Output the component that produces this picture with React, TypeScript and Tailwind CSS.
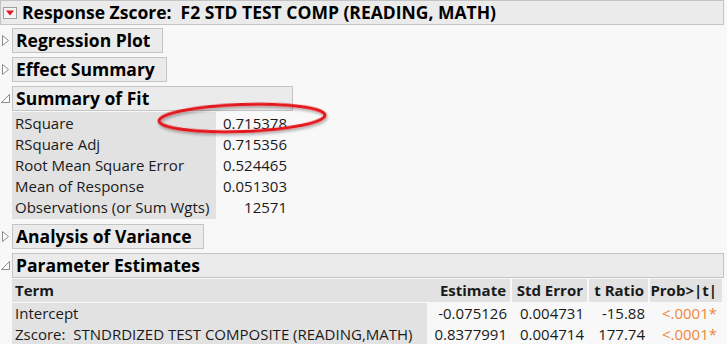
import type { ReactNode } from "react";

const font = { fontFamily: '"Open Sans", "Noto Sans", sans-serif' };

function ClosedArrow() {
  return (
    <svg width="12" height="25" viewBox="0 0 12 25" className="shrink-0">
      <path d="M2.5 7.5 L8.5 12.5 L2.5 17.5 Z" fill="#ffffff" stroke="#8a8a8a" strokeWidth="1" />
    </svg>
  );
}

function OpenArrow() {
  return (
    <svg width="12" height="25" viewBox="0 0 12 25" className="shrink-0">
      <path d="M9.5 8.5 L9.5 16.5 L1.5 16.5 Z" fill="#ffffff" stroke="#8a8a8a" strokeWidth="1" />
    </svg>
  );
}

function OutlineTitle({ children, width, open }: { children: ReactNode; width: string; open?: boolean }) {
  return (
    <div className="flex items-center">
      {open ? <OpenArrow /> : <ClosedArrow />}
      <div
        className={`${width} h-[25px] border border-[#c4c4c4] bg-[#ebebeb] pl-[3px] text-[17.5px] font-bold leading-[23px] text-black`}
      >
        {children}
      </div>
    </div>
  );
}

const fitRows = [
  ["RSquare", "0.715378"],
  ["RSquare Adj", "0.715356"],
  ["Root Mean Square Error", "0.524465"],
  ["Mean of Response", "0.051303"],
  ["Observations (or Sum Wgts)", "12571"],
];

const estimates = [
  ["Intercept", "-0.075126", "0.004731", "-15.88", "<.0001*"],
  ["Zscore:  STNDRDIZED TEST COMPOSITE (READING,MATH)", "0.8377991", "0.004714", "177.74", "<.0001*"],
];

export default function App() {
  return (
    <div className="relative h-[344px] w-[727px] overflow-hidden bg-[#f8f8f8] text-[15px]" style={font}>
      <div className="mr-[3px] flex h-[25px] items-center border border-[#c4c4c4] bg-[#ebebeb]">
        <div className="ml-[2px] flex h-[12px] w-[14px] items-center justify-center border border-[#a0a0a0] bg-[#f4f4f4]">
          <svg width="10" height="6" viewBox="0 0 10 6">
            <path d="M1 0.5 L9 0.5 L5 5.5 Z" fill="#e0141e" />
          </svg>
        </div>
        <div className="ml-[5px] text-[17.5px] font-bold leading-[23px] text-black">
          Response Zscore:&nbsp; F2 STD TEST COMP (READING, MATH)
        </div>
      </div>

      <div className="mt-[3px] flex flex-col gap-[4px]">
        <OutlineTitle width="w-[151px]">Regression Plot</OutlineTitle>
        <OutlineTitle width="w-[155px]">Effect Summary</OutlineTitle>
        <div>
          <OutlineTitle width="w-[281px]" open>
            Summary of Fit
          </OutlineTitle>
          <div className="mt-[1px] ml-[12px] flex">
            <div className="w-[204px] bg-[#e2e2e2] py-[1px]">
              {fitRows.map(([label]) => (
                <div key={label} className="h-[21px] pl-[3px] leading-[20px] whitespace-nowrap text-[#1a1a1a]">
                  {label}
                </div>
              ))}
            </div>
            <div className="w-[71px] py-[1px]">
              {fitRows.map(([label, value]) => (
                <div key={label} className="h-[21px] text-right leading-[20px] text-[#1a1a1a]">
                  {value}
                </div>
              ))}
            </div>
          </div>
        </div>
        <div className="mt-[1px]">
          <OutlineTitle width="w-[192px]">Analysis of Variance</OutlineTitle>
        </div>
        <div>
          <OutlineTitle width="w-[712px]" open>
            Parameter Estimates
          </OutlineTitle>
          <table className="mt-[1px] ml-[12px] border-collapse text-[#1a1a1a]">
            <thead>
              <tr className="h-[22px] border-b-[1px] border-[#f8f8f8] bg-[#e2e2e2]">
                <th className="w-[415px] pl-[3px] text-left font-bold">Term</th>
                <th className="w-[84px] border-r-[2px] border-[#f8f8f8] pr-[4px] text-right font-bold">Estimate</th>
                <th className="w-[77px] border-r-[2px] border-[#f8f8f8] pr-[4px] text-right font-bold">Std Error</th>
                <th className="w-[61px] border-r-[2px] border-[#f8f8f8] pr-[4px] text-right font-bold">t Ratio</th>
                <th className="w-[73px] pr-[5px] text-right font-bold">Prob&gt;|t|</th>
              </tr>
            </thead>
            <tbody>
              {estimates.map(([term, est, se, t, p]) => (
                <tr key={term} className="h-[21px] leading-[20px]">
                  <td className="bg-[#e2e2e2] pl-[3px] whitespace-pre">{term}</td>
                  <td className="pr-[4px] text-right">{est}</td>
                  <td className="pr-[4px] text-right">{se}</td>
                  <td className="pr-[4px] text-right">{t}</td>
                  <td className="pr-[5px] text-right text-[#f0873c]">{p}</td>
                </tr>
              ))}
            </tbody>
          </table>
        </div>
      </div>

      <svg className="pointer-events-none absolute top-0 left-0" width="727" height="344">
        <defs>
          <filter id="oval-shadow" x="-10%" y="-40%" width="120%" height="180%">
            <feDropShadow dx="1" dy="2" stdDeviation="1.5" floodColor="#000" floodOpacity="0.35" />
          </filter>
        </defs>
        <ellipse
          cx="242"
          cy="118"
          rx="83"
          ry="13.5"
          transform="rotate(-2 242 118)"
          fill="none"
          stroke="#e4161c"
          strokeWidth="3"
          filter="url(#oval-shadow)"
        />
      </svg>
    </div>
  );
}
